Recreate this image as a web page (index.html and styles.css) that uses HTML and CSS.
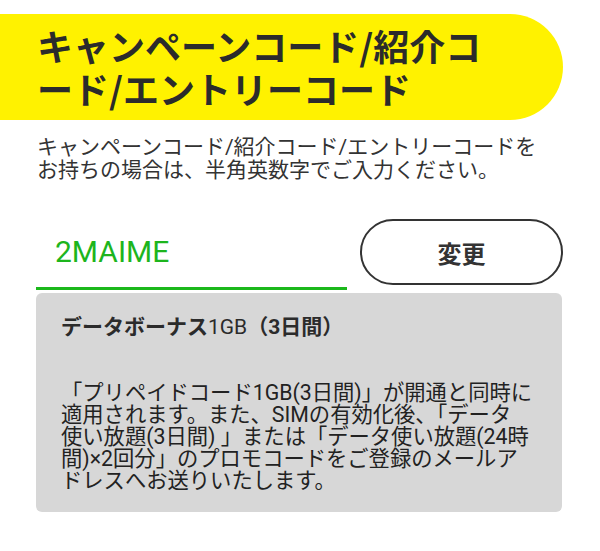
FILE: index.html
```html
<!DOCTYPE html>
<html lang="ja">
<head>
    <meta charset="UTF-8">
    <meta name="viewport" content="width=device-width, initial-scale=1.0">
    <title>キャンペーンコード入力</title>
    <link rel="stylesheet" href="styles.css">
</head>
<body>
    <div class="page">
        <!-- 見出し -->
        <div class="banner">
            <h1 class="banner-title">キャンペーンコード/紹介コード/エントリーコード</h1>
        </div>

        <p class="lead">キャンペーンコード/紹介コード/エントリーコードをお持ちの場合は、半角英数字でご入力ください。</p>

        <!-- 入力欄 -->
        <div class="code-row">
            <div class="code-input">2MAIME</div>
            <button class="change-button">変更</button>
        </div>

        <!-- 特典内容 -->
        <div class="bonus-box">
            <div class="bonus-title">データボーナス<span class="thin">1GB</span>（3日間）</div>
            <p class="bonus-text">「プリペイドコード1GB(3日間)」が開通と同時に<br>適用されます。また、SIMの有効化後、「データ<br>使い放題(3日間) 」または「データ使い放題(24時<br>間)×2回分」のプロモコードをご登録のメールア<br>ドレスへお送りいたします。</p>
        </div>
    </div>
</body>
</html>
```

FILE: styles.css
```css
/* 基本 */
* {
    box-sizing: border-box;
}
body {
    margin: 0;
    background-color: #fff;
    color: #333;
    font-family: Roboto, "Noto Sans CJK JP", sans-serif;
}
button {
    border: none;
    background: none;
    padding: 0;
    cursor: pointer;
    font-family: inherit;
}

.page {
    width: 600px;
    padding-top: 14px;
}

/* 黄色い見出し */
.banner {
    width: 563px;
    height: 106px;
    background-color: #fff200;
    border-radius: 0 53px 53px 0;
    padding: 10px 60px 0 37px;
}
.banner-title {
    margin: 0;
    font-size: 36px;
    line-height: 43px;
    font-weight: bold;
    color: #2b2b2b;
    font-family: "Noto Sans CJK JP", sans-serif;
    line-break: loose;
}

/* 説明文 */
.lead {
    margin: 16px 0 0;
    padding: 0 44px 0 37px;
    font-size: 21px;
    line-height: 23px;
    color: #333;
}

/* 入力欄と変更ボタン */
.code-row {
    display: flex;
    align-items: flex-start;
    gap: 13px;
    margin: 37px 0 0 36px;
}
.code-input {
    width: 311px;
    height: 71px;
    border-bottom: 3px solid #1bb81b;
    padding-left: 19px;
    font-size: 30px;
    line-height: 66px;
    color: #1db51d;
}
.change-button {
    width: 203px;
    height: 66px;
    border: 2px solid #333;
    border-radius: 33px;
    font-size: 24px;
    font-weight: bold;
    color: #333;
    font-family: "Noto Sans CJK JP", sans-serif;
}

/* グレーの枠 */
.bonus-box {
    width: 526px;
    height: 219px;
    margin: 3px 0 0 36px;
    padding: 22px 12px 0 25px;
    background-color: #d7d7d7;
    border-radius: 6px;
}
.bonus-title {
    font-size: 21px;
    line-height: 24px;
    font-weight: bold;
    color: #2b2b2b;
}
.bonus-title .thin {
    font-weight: normal;
}
.bonus-text {
    margin: 43px 0 0;
    font-size: 21.3px;
    line-height: 22px;
    color: #222;
}
```
